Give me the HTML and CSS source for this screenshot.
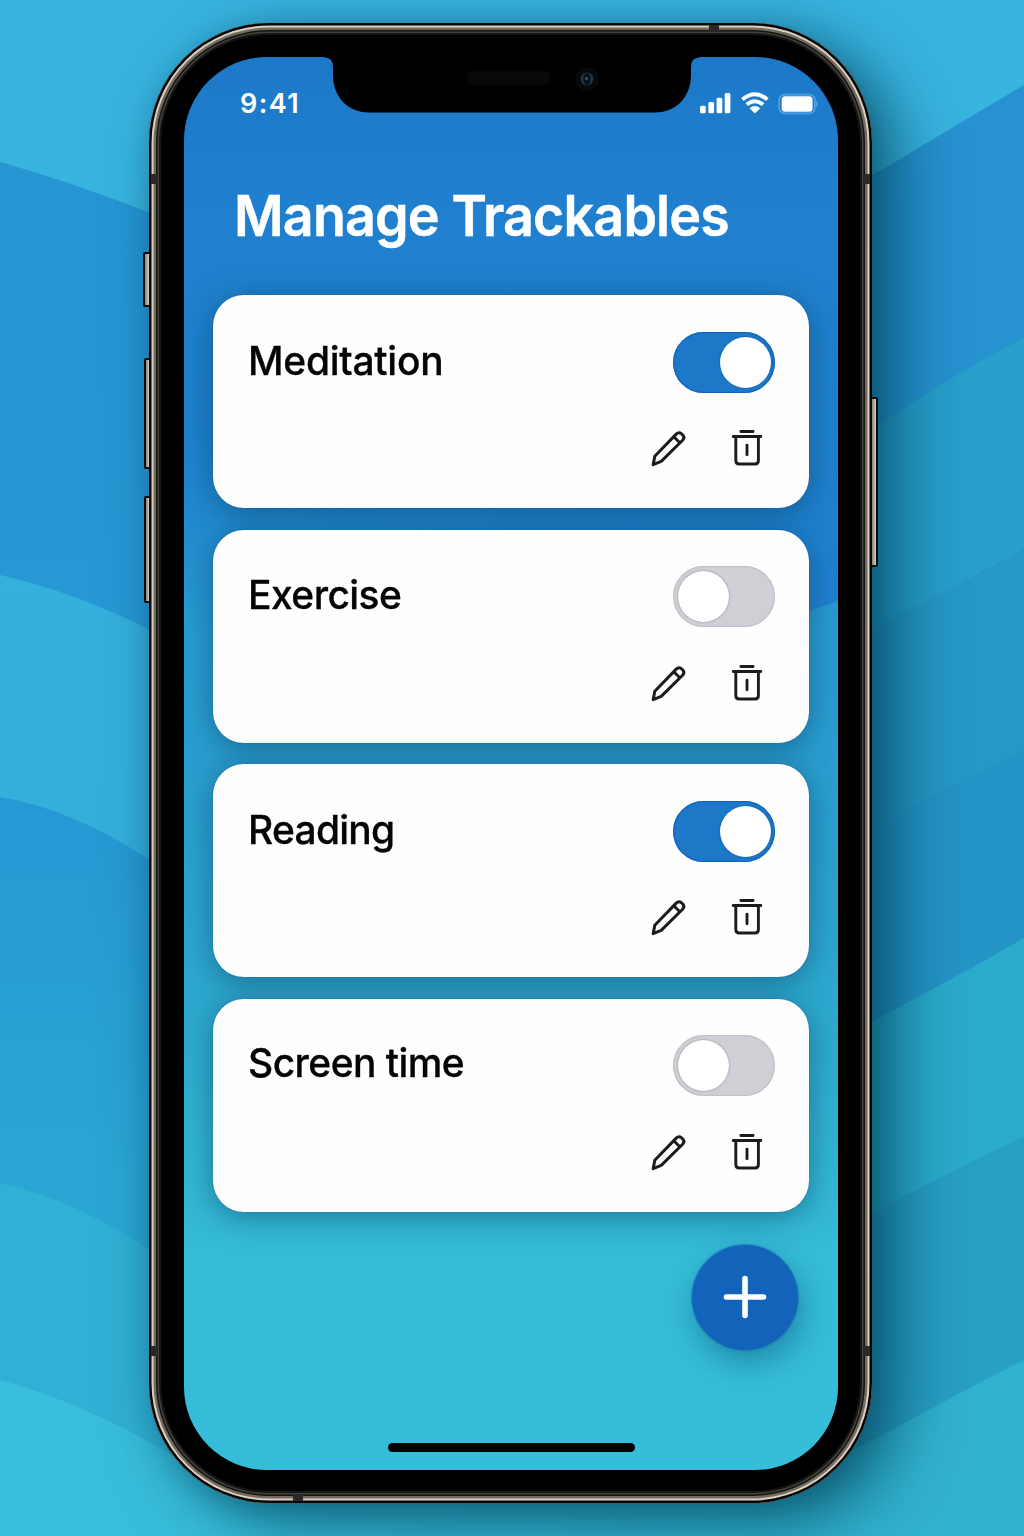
FILE: index.html
```html
<!DOCTYPE html>
<html lang="en">
<head>
<meta charset="utf-8">
<title>Manage Trackables</title>
<link rel="stylesheet" href="styles.css">
</head>
<body>
<svg class="wallpaper" viewBox="0 0 1024 1536" preserveAspectRatio="none" aria-hidden="true">
  <defs>
    <linearGradient id="l1" x1="0" y1="0" x2="0" y2="1"><stop offset="0" stop-color="#2696d3"/><stop offset="1" stop-color="#289cd6"/></linearGradient>
    <linearGradient id="l2" x1="0" y1="0" x2="0" y2="1"><stop offset="0" stop-color="#34b0dc"/><stop offset="1" stop-color="#32acdc"/></linearGradient>
    <linearGradient id="l3" x1="0" y1="0" x2="0" y2="1"><stop offset="0" stop-color="#2698d4"/><stop offset=".55" stop-color="#2aa6d4"/><stop offset="1" stop-color="#2aa6d4"/></linearGradient>
    <linearGradient id="floor" gradientUnits="userSpaceOnUse" x1="200" y1="0" x2="900" y2="0"><stop offset="0" stop-color="#38bedc"/><stop offset="1" stop-color="#31b2cf"/></linearGradient>
  </defs>
  <rect width="1024" height="1536" fill="#38b4e0"/>
  <path d="M0 162Q75 183 150 213L512 340V1480H0Z" fill="url(#l1)"/>
  <path d="M0 575Q75 592 150 630L512 760V1480H0Z" fill="url(#l2)"/>
  <path d="M0 797Q70 808 150 860L512 990V1480H0Z" fill="url(#l3)"/>
  <path d="M0 1183Q75 1200 150 1250L512 1360V1480H0Z" fill="#30b0d4"/>
  <path d="M1024 85Q960 123 890 165L512 380V1480H1024Z" fill="#2692d0"/>
  <path d="M1024 338Q960 370 885 421L512 640V1480H1024Z" fill="#289fcc"/>
  <path d="M1024 549Q960 584 890 619L512 830V1480H1024Z" fill="#2698c6"/>
  <path d="M1024 749Q960 780 875 828L512 1030V1480H1024Z" fill="#2494c6"/>
  <path d="M1024 938Q960 975 875 1020L512 1200V1480H1024Z" fill="#2baccd"/>
  <path d="M1024 1137Q960 1166 875 1212L512 1380V1480H1024Z" fill="#289fc5"/>
  <path d="M0 1380Q90 1404 190 1466L215 1480H790L880 1437Q960 1392 1024 1360V1536H0Z" fill="url(#floor)"/>
</svg>

<svg class="sprite" aria-hidden="true">
  <symbol id="pencil" viewBox="0 0 36 38">
    <path d="M2.2 35.600L3.800 27.200 25.200 5.100Q27.800 2.500 30.400 4.700L32 6.300Q34 8.700 31.600 11.300L10.200 32.400Z M23.300 8.200L28.800 13.700" fill="none" stroke="#1c1c1e" stroke-width="3" stroke-linejoin="round" stroke-linecap="round"/>
  </symbol>
  <symbol id="trash" viewBox="0 0 32 38">
    <path d="M9.900 2.500H22.100M2.200 7.500H29.800M4.800 7.500V31.500Q4.800 35 8.300 35H23.900Q27.400 35 27.400 31.500V7.500M16 16.300V25.700" fill="none" stroke="#1c1c1e" stroke-width="2.900" stroke-linecap="round"/>
  </symbol>
</svg>

<div class="phone">
  <i class="key key-mute"></i><i class="key key-up"></i><i class="key key-down"></i><i class="key key-power"></i>
  <i class="band band-lt"></i><i class="band band-rt"></i><i class="band band-lb"></i><i class="band band-rb"></i>
  <i class="band band-top"></i><i class="band band-bottom"></i>
  <main class="screen">
    <header class="status">
      <span class="time">9:41</span>
      <svg class="notch" viewBox="0 0 374 57" aria-hidden="true">
        <path d="M0 0V.6Q8 1 8 10V18C8 39 22 55.500 44 55.500H330C352 55.500 366 39 366 18V10Q366 1 374 .6V0Z"/>
        <rect x="142" y="14" width="84" height="14" rx="7" fill="#070808"/>
        <circle cx="262" cy="22" r="11.500" fill="#07090b"/>
        <circle cx="262" cy="22" r="6.500" fill="#1d3646"/>
        <ellipse cx="262" cy="22" rx="3.600" ry="6" fill="#0b1118"/>
        <circle cx="261.500" cy="21.500" r="1.500" fill="#5a4a52"/>
      </svg>
      <svg class="indicators" viewBox="0 0 118 24" aria-hidden="true">
        <g fill="#fff">
          <rect x="0" y="14.700" width="5.700" height="7.600" rx="1.500"/><rect x="8.400" y="11" width="5.700" height="11.300" rx="1.500"/><rect x="16.600" y="6.700" width="5.700" height="15.600" rx="1.500"/><rect x="24.700" y="2" width="5.700" height="20.300" rx="1.500"/>
          <path d="M54.900 22.400L49.500 17.200Q54.900 13 60.300 17.200Z"/>
        </g>
        <path d="M42.400 8.500Q54.900-1.800 67.400 8.500M46.700 13.600Q54.900 6.800 63.100 13.600" fill="none" stroke="#fff" stroke-width="3.900"/>
        <rect x="79.200" y="3.700" width="35.600" height="18.500" rx="5.500" fill="#1b67bf" stroke="#48a0e8" stroke-width="2"/>
        <path d="M116 9.500Q119.500 13 116 16.500Z" fill="#48a0e8"/>
        <rect x="81.600" y="5.200" width="31" height="15.500" rx="3.500" fill="#fff"/>
      </svg>
    </header>
    <h1 class="title">Manage Trackables</h1>
    <section class="cards">
      <article class="card">
        <div class="row"><h2 class="name meditation">Meditation</h2><span class="switch on"></span></div>
        <div class="actions"><svg class="pencil"><use href="#pencil"/></svg><svg class="trash"><use href="#trash"/></svg></div>
      </article>
      <article class="card">
        <div class="row"><h2 class="name exercise">Exercise</h2><span class="switch"></span></div>
        <div class="actions"><svg class="pencil"><use href="#pencil"/></svg><svg class="trash"><use href="#trash"/></svg></div>
      </article>
      <article class="card">
        <div class="row"><h2 class="name reading">Reading</h2><span class="switch on"></span></div>
        <div class="actions"><svg class="pencil"><use href="#pencil"/></svg><svg class="trash"><use href="#trash"/></svg></div>
      </article>
      <article class="card">
        <div class="row"><h2 class="name screentime">Screen time</h2><span class="switch"></span></div>
        <div class="actions"><svg class="pencil"><use href="#pencil"/></svg><svg class="trash"><use href="#trash"/></svg></div>
      </article>
    </section>
    <div class="fab"><svg viewBox="0 0 44 44"><path d="M22 3.500V40.500M3.500 22H40.500" stroke="#fff" stroke-width="5.600" stroke-linecap="round"/></svg></div>
    <div class="home"></div>
  </main>
</div>
</body>
</html>
```

FILE: styles.css
```css
* { box-sizing: border-box; }
body {
  margin: 0;
  width: 1024px;
  height: 1536px;
  overflow: hidden;
  font-family: Inter, "Liberation Sans", sans-serif;
}
.wallpaper { position: absolute; inset: 0; width: 1024px; height: 1536px; }
.sprite { position: absolute; width: 0; height: 0; }

/* Device */
.phone {
  position: relative;
  width: 723px;
  height: 1480px;
  margin: 23px 0 0 149px;
  padding: 34px 34px 33px 35px;
  border-radius: 120px;
  background: #000;
  box-shadow:
    inset 0 0 0 2.500px #050505,
    inset 0 0 0 4.500px #d9d0c4,
    inset 0 0 0 7px #746b60,
    inset 0 0 0 8.500px #16150f,
    inset 0 0 0 10px #45423e,
    inset 0 0 0 12px #161616,
    24px 18px 66px rgba(0, 62, 84, .74),
    2px 6px 24px rgba(0, 60, 90, .2);
}
.key {
  position: absolute;
  width: 8px;
  border: 2px solid #0b0b0b;
  background: linear-gradient(90deg, #8a8076, #d6cdc3);
}
.key-mute { left: -6px; top: 229px; height: 55px; border-radius: 2px 0 0 2px; }
.key-up { left: -5px; top: 335px; height: 111px; width: 7px; border-radius: 2px 0 0 2px; }
.key-down { left: -5px; top: 473px; height: 107px; width: 7px; border-radius: 2px 0 0 2px; }
.key-power { right: -6px; top: 374px; height: 170px; border-radius: 0 2px 2px 0; }
.band { position: absolute; width: 7px; height: 10px; background: #2a2928; }
.band-lt { left: 2px; top: 151px; }
.band-rt { right: 2px; top: 151px; }
.band-lb { left: 2px; top: 1323px; }
.band-rb { right: 2px; top: 1323px; }
.band-top { left: 560px; top: 2px; width: 10px; height: 7px; }
.band-bottom { left: 144px; bottom: 2px; width: 10px; height: 7px; }

.screen {
  position: relative;
  z-index: 0;
  display: flex;
  flex-direction: column;
  width: 654px;
  height: 1413px;
  border-radius: 83px;
  overflow: hidden;
  color: #fff;
  background: linear-gradient(180deg, #1d78c8 0, #2080cf 160px, #1f81ce 380px, #2289d0 450px, #289ad2 560px, #2a9fcf 750px, #2eaccf 1000px, #35bcd8 1200px, #35bdd9 1413px);
}
/* Darker wave that ends beside the second card */
.screen::before {
  content: "";
  position: absolute;
  z-index: -1;
  inset: 0;
  background: linear-gradient(180deg, #1f81ce00 250px, #1f80cd 400px, #1f80d0 560px);
  clip-path: polygon(0 0, 100% 0, 100% 544px, 95.700% 554px, 50% 570px, 0 570px);
  -webkit-mask-image: linear-gradient(90deg, transparent, #000 70%);
  mask-image: linear-gradient(90deg, transparent, #000 70%);
}

/* Status bar */
.status { display: flex; height: 57px; align-items: flex-start; }
.time { width: 141px; flex: none; padding: 30px 0 0 56px; font-size: 27px; line-height: 34px; font-weight: 600; letter-spacing: 1.400px; }
.notch { width: 374px; height: 57px; flex: none; }
.indicators { width: 118px; height: 24px; margin: 34px 0 0 1px; flex: none; }

.title {
  margin: 65px 0 0 50px;
  font-size: 56px;
  line-height: 74px;
  font-weight: 600;
  letter-spacing: -.900px;
  white-space: nowrap;
  transform: scaleX(.961);
  transform-origin: 2px 50%;
  -webkit-text-stroke: .5px #fff;
}

/* Trackable cards */
.cards { display: flex; flex-direction: column; gap: 21.500px; margin: 42px 29px 0; }
.card {
  height: 213px;
  padding: 37px 34px 0 35px;
  border-radius: 31px;
  background: #fefefe;
  box-shadow: 0 0 1px #0b55a0, 0 5px 30px rgba(10, 62, 92, .52);
}
.row { display: flex; justify-content: space-between; }
.name {
  margin: 2px 0 0;
  color: #050505;
  font-size: 40px;
  line-height: 54px;
  font-weight: 500;
  letter-spacing: -.600px;
  transform: scaleX(.975);
  transform-origin: 3px 50%;
  -webkit-text-stroke: .3px #050505;
}
.name.meditation { letter-spacing: -.300px; }
.name.exercise { margin-top: 1px; }
.name.reading { letter-spacing: -.800px; }
.name.screentime { margin-top: 0; }
.switch { display: flex; width: 102px; height: 61px; padding: 5px; border-radius: 31px; background: #cfcfd5; box-shadow: inset 0 0 1px 1px #bfbfc6; }
.switch:not(.on) { margin: -1px 0 1px; }
.switch::before { content: ""; width: 51px; height: 51px; border-radius: 50%; background: #fff; box-shadow: 0 0 2px rgba(90, 90, 100, .7); }
.switch.on { justify-content: flex-end; padding-right: 4px; background: #1d79c8; box-shadow: inset 0 0 1px 1px #0e60bd; }
.switch.on::before { box-shadow: 0 0 2px #0745a0; }
.actions { display: flex; justify-content: flex-end; gap: 44px; margin: 36px 12px 0 0; }
.pencil { width: 36px; height: 38px; }
.trash { width: 32px; height: 38px; }

.fab {
  display: flex;
  align-items: center;
  justify-content: center;
  width: 106px;
  height: 105px;
  flex: none;
  margin: 33px 40px 0 auto;
  border-radius: 50%;
  background: #1263b9;
  box-shadow: 0 0 1px 1px rgba(20, 100, 190, .5), 4px 12px 30px rgba(4, 72, 105, .45);
}
.fab svg { width: 44px; height: 44px; }
.home { width: 247px; height: 9px; margin: 93px auto 0 204px; border-radius: 5px; background: #000; }
```
